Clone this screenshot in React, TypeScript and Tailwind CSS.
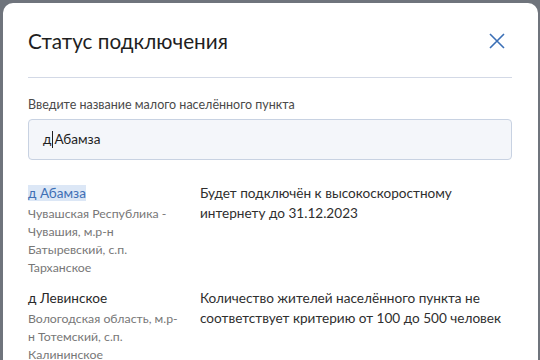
import React from 'react';

const results = [
  {
    name: 'д Абамза',
    region: 'Чувашская Республика - Чувашия, м.р-н Батыревский, с.п. Тарханское',
    status: 'Будет подключён к высокоскоростному интернету до 31.12.2023',
    active: true,
  },
  {
    name: 'д Левинское',
    region: 'Вологодская область, м.р-н Тотемский, с.п. Калининское',
    status: 'Количество жителей населённого пункта не соответствует критерию от 100 до 500 человек',
    active: false,
  },
];

export default function App() {
  return (
    <div
      className="h-[360px] w-[540px] overflow-hidden bg-[#6f747c] pl-[3px] pt-[3px]"
      style={{ fontFamily: 'Lato, "Noto Sans", sans-serif' }}
    >
      <div className="h-[400px] w-[535px] rounded-[10px] bg-white px-[25px] pt-[24px]">
        {/* заголовок */}
        <div className="flex items-center justify-between">
          <h2 className="text-[20.7px] leading-[28px] text-[#1f1f1f]">Статус подключения</h2>
          <button type="button" className="mr-[7px] text-[#3b6fb6]">
            <svg width="18" height="18" viewBox="0 0 18 18" fill="none" stroke="currentColor" strokeWidth="1.6">
              <path d="M2 2L16 16M16 2L2 16" />
            </svg>
          </button>
        </div>
        <div className="mt-[22px] h-px w-[484px] bg-[#d3d9e6]" />

        {/* поиск */}
        <label className="mt-[19px] block text-[12.5px] leading-[16px] text-[#4a4a4a]">
          Введите название малого населённого пункта
        </label>
        <div className="mt-[6px] flex h-[41px] w-[484px] items-center rounded-[4px] border border-[#c8d2e2] bg-[#f4f6fa] px-[14px] text-[13.6px] text-[#1f1f1f]">
          <span>д</span>
          <span className="mx-[1px] inline-block h-[17px] w-px bg-[#1f1f1f]" />
          <span>Абамза</span>
        </div>

        {/* результаты */}
        <div className="mt-[23px] flex flex-col gap-[11px]">
          {results.map((r) => (
            <div key={r.name} className="flex gap-[18px]">
              <div className="w-[154px] shrink-0">
                <div className="text-[13.6px] leading-[20px]">
                  <span className={r.active ? 'bg-[#dce7f6] text-[#3f6fb5]' : 'text-[#2a2a2a]'}>{r.name}</span>
                </div>
                <div className="mt-[2px] text-[12.3px] leading-[18px] text-[#777]">{r.region}</div>
              </div>
              <div className="w-[312px] text-[13.6px] leading-[20px] text-[#2f2f2f]">{r.status}</div>
            </div>
          ))}
        </div>
      </div>
    </div>
  );
}
